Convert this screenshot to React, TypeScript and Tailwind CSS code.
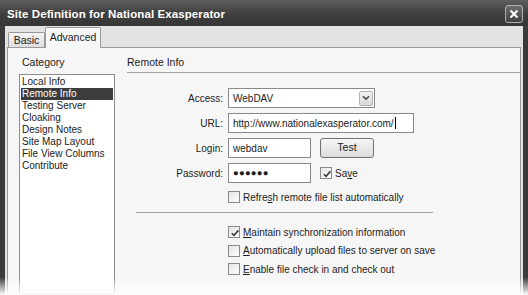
import React from "react";

const Check = () => (
  <svg width="10" height="10" viewBox="0 0 10 10" className="absolute left-[0.5px] top-[0.5px]">
    <path d="M1.8 5.2 L4 7.4 L8.4 2.4" fill="none" stroke="#3a3a3a" strokeWidth="1.6" />
  </svg>
);

const Box = ({ checked }: { checked?: boolean }) => (
  <div className="relative w-[12px] h-[12px] border border-[#8a8a8a] bg-gradient-to-br from-[#e4e4e4] to-white shrink-0">
    {checked && <Check />}
  </div>
);

const CheckRow = ({ checked, children }: { checked?: boolean; children: React.ReactNode }) => (
  <div className="flex items-center h-[12px]">
    <Box checked={checked} />
    <span className="ml-[3px] leading-[13px] whitespace-nowrap">{children}</span>
  </div>
);

export default function App() {
  const items = [
    "Local Info",
    "Remote Info",
    "Testing Server",
    "Cloaking",
    "Design Notes",
    "Site Map Layout",
    "File View Columns",
    "Contribute",
  ];
  return (
    <div className="w-[528px] h-[295px] relative overflow-hidden bg-white font-['Liberation_Sans',Arial,sans-serif] text-[10px] text-[#1c1c1c]">
      <div className="w-full h-full flex flex-col bg-[#3a3a3a] rounded-tr-[6px]">
        {/* Title bar */}
        <div className="h-[26px] shrink-0 flex items-center justify-between pl-[7px] pr-[5px] bg-gradient-to-b from-[#5e5e5e] via-[#404040] to-[#363636]">
          <span className="text-white font-bold text-[11.5px] tracking-[0.1px] leading-[14px] mt-[2px] whitespace-nowrap">
            Site Definition for National Exasperator
          </span>
          <div className="w-[18px] h-[18px] mt-[2px] rounded-[3px] border border-[#b0b0b0] bg-gradient-to-b from-[#6e6e6e] to-[#404040] flex items-center justify-center">
            <svg width="10" height="10" viewBox="0 0 10 10">
              <path d="M1.5 1.5 L8.5 8.5 M8.5 1.5 L1.5 8.5" stroke="white" strokeWidth="2" />
            </svg>
          </div>
        </div>
        {/* Body */}
        <div className="flex-1 flex flex-col ml-[5px] mr-[5px] bg-[#e2e2e2] pl-[2px] pr-[2px]">
          <div className="h-[21px] shrink-0 flex items-end">
            <div className="h-[15px] w-[37px] ml-[1px] border border-b-0 border-[#9a9a9a] rounded-t-[2px] bg-gradient-to-b from-[#f4f4f4] to-[#dedede] flex items-center justify-center">
              <span className="leading-[12px] text-[10.5px]">Basic</span>
            </div>
            <div className="relative z-10 h-[21px] w-[56px] -mb-px border border-b-0 border-[#9a9a9a] rounded-t-[2px] bg-[#f7f7f7] flex items-start justify-center pt-[3px]">
              <span className="leading-[12px] text-[10.5px]">Advanced</span>
            </div>
          </div>
          <div className="flex-1 flex border border-[#9a9a9a] bg-[#f6f6f6] pl-[11px] pt-[8px]">
            {/* Left column */}
            <div className="w-[96px] shrink-0 flex flex-col">
              <div className="leading-[13px] h-[13px] pl-[3px] text-[10.5px]">Category</div>
              <div className="flex-1 mt-[5px] border border-[#8c8c8c] bg-white pt-[1px]">
                {items.map((it) => (
                  <div
                    key={it}
                    className={
                      it === "Remote Info"
                        ? "h-[12px] leading-[12px] mx-[1px] px-[1px] bg-[#3c3c3c] text-white"
                        : "h-[12px] leading-[12px] mx-[1px] px-[1px]"
                    }
                  >
                    {it}
                  </div>
                ))}
              </div>
            </div>
            {/* Right column */}
            <div className="flex-1 ml-[12px] flex flex-col">
              <div className="leading-[13px] pb-[3px] border-b border-[#a4a4a4] text-[10.5px]">Remote Info</div>
              <div className="mt-[15px] flex flex-col gap-[5px]">
                <div className="flex items-center h-[20px]">
                  <div className="w-[96px] text-right">Access:</div>
                  <div className="ml-[5px] w-[147px] h-[20px] border border-[#8a8a8a] bg-white flex items-center justify-between pl-[4px] pr-[1px]">
                    <span>WebDAV</span>
                    <div className="w-[14px] h-[15px] border border-[#b4b4b4] rounded-[2px] bg-gradient-to-b from-[#f4f4f4] to-[#d8d8d8] flex items-center justify-center">
                      <svg width="8" height="6" viewBox="0 0 8 6">
                        <path d="M1 1.2 L4 4.2 L7 1.2" fill="none" stroke="#444" strokeWidth="1.6" />
                      </svg>
                    </div>
                  </div>
                </div>
                <div className="flex items-center h-[20px]">
                  <div className="w-[96px] text-right">URL:</div>
                  <div className="ml-[5px] w-[186px] h-[20px] border border-[#8a8a8a] bg-white flex items-center pl-[4px]">
                    <span>http://www.nationalexasperator.com/</span>
                    <span className="ml-[1px] w-px h-[12px] bg-black" />
                  </div>
                </div>
                <div className="flex items-center h-[20px]">
                  <div className="w-[96px] text-right">Login:</div>
                  <div className="ml-[5px] w-[83px] h-[20px] border border-[#8a8a8a] bg-white flex items-center pl-[4px]">
                    webdav
                  </div>
                  <div className="ml-[9px] w-[54px] h-[20px] rounded-[3px] border border-[#707070] bg-gradient-to-b from-[#f6f6f6] to-[#dcdcdc] flex items-center justify-center text-[10.5px]">
                    Test
                  </div>
                </div>
                <div className="flex items-center h-[20px]">
                  <div className="w-[96px] text-right">Password:</div>
                  <div className="ml-[5px] w-[83px] h-[20px] border border-[#8a8a8a] bg-white flex items-center pl-[4px] text-[9.5px] tracking-[0.2px] font-bold">
                    ●●●●●●
                  </div>
                  <div className="ml-[9px] flex items-center">
                    <Box checked />
                    <span className="ml-[3px]">
                      Sa<span className="underline">v</span>e
                    </span>
                  </div>
                </div>
              </div>
              <div className="ml-[101px] mt-[8px]">
                <CheckRow>
                  Refre<span className="underline">s</span>h remote file list automatically
                </CheckRow>
              </div>
              <div className="ml-[9px] mt-[9px] w-[297px] h-px bg-[#a4a4a4]" />
              <div className="ml-[101px] mt-[13px] flex flex-col gap-[6.5px]">
                <CheckRow checked>
                  <span className="underline">M</span>aintain synchronization information
                </CheckRow>
                <CheckRow>
                  <span className="underline">A</span>utomatically upload files to server on save
                </CheckRow>
                <CheckRow>
                  <span className="underline">E</span>nable file check in and check out
                </CheckRow>
              </div>
            </div>
          </div>
        </div>
      </div>
      <div className="absolute left-0 right-0 bottom-0 h-[18px] bg-gradient-to-b from-transparent to-white" />
    </div>
  );
}
